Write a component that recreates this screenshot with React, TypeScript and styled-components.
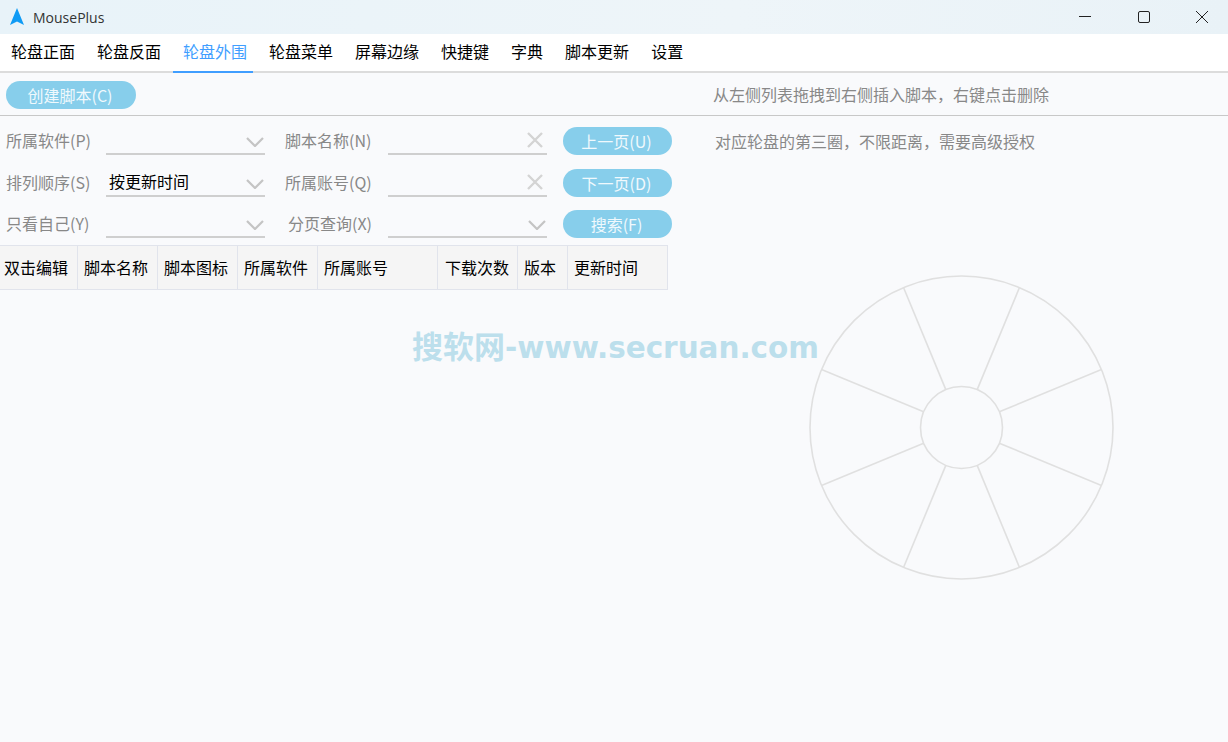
import * as React from 'react';
import styled, { createGlobalStyle } from 'styled-components'

const GlobalStyle = createGlobalStyle`
html, body {
    margin: 0;
    padding: 0;
    height: 100%;
}
body {
    font-family: "Noto Sans CJK SC", "Noto Sans", sans-serif;
    background: #f9fafc;
}
`

const Window = styled.div`
position: relative;
width: 1228px;
height: 742px;
overflow: hidden;
background: #f9fafc;
display: flex;
flex-direction: column;
`

const TitleBar = styled.div`
height: 34px;
flex: none;
display: flex;
align-items: center;
padding-left: 10px;
background: linear-gradient(90deg, #e8f3f9 0%, #eef5f9 60%, #e9f2f7 100%);
`

const AppTitle = styled.span`
margin-left: 9px;
font-family: "Open Sans", sans-serif;
font-size: 14px;
color: #333;
`

const WindowButtons = styled.div`
margin-left: auto;
display: flex;
`

const WindowButton = styled.div`
width: 58.5px;
height: 34px;
box-sizing: border-box;
padding-right: 19px;
display: flex;
align-items: center;
justify-content: flex-end;
`

const TabBar = styled.div`
height: 37px;
flex: none;
display: flex;
background: #fff;
border-bottom: 2px solid #dcdcdc;
`

const Tab = styled.div<{ $active?: boolean }>`
height: 39px;
box-sizing: border-box;
margin: 0 5px 0 1px;
padding: 0 6px 3px 10px;
display: flex;
align-items: center;
font-size: 16px;
color: ${p => (p.$active ? '#409eff' : '#000')};
border-bottom: 2px solid ${p => (p.$active ? '#409eff' : 'transparent')};
`

const Toolbar = styled.div`
height: 43px;
flex: none;
box-sizing: border-box;
display: grid;
grid-template-columns: 713px 1fr;
align-items: center;
padding-top: 2px;
border-bottom: 1px solid #c8c8c8;
`

const Main = styled.div`
flex: 1;
display: grid;
grid-template-columns: 713px 1fr;
`

const LeftPanel = styled.div`
padding-top: 11px;
`

const FormGrid = styled.div`
display: grid;
grid-template-columns: 106px 159px 123px 159px 125px;
grid-auto-rows: 41.5px;
width: 672px;
height: 118px;
`

const FieldLabel = styled.label<{ $indent?: number }>`
height: 28px;
box-sizing: border-box;
display: flex;
align-items: center;
padding-left: ${p => p.$indent ?? 6}px;
padding-bottom: 2px;
font-size: 16px;
color: #888;
`

const Field = styled.div`
height: 28px;
box-sizing: border-box;
display: flex;
align-items: center;
justify-content: space-between;
padding: 0 3px;
border-bottom: 2px solid #cfcfcf;
font-size: 16px;
color: #000;
`

const FieldValue = styled.span`
margin-bottom: 2px;
`

const PillButton = styled.button`
height: 28px;
border: none;
padding: 0 2px 0 0;
border-radius: 14px;
background: #87ceeb;
color: #f0f9fd;
font-family: inherit;
font-size: 16px;
`

const CreateButton = styled(PillButton)`
width: 130px;
margin-left: 6px;
`

const PageButton = styled(PillButton)`
width: 109px;
margin-left: 16px;
`

const Table = styled.div`
display: grid;
grid-template-columns: 78px 80px 80px 80px 120px 80px 50px 100px;
width: 668px;
height: 45px;
box-sizing: border-box;
border-top: 1px solid #e1e4ec;
border-bottom: 1px solid #e1e4ec;
border-right: 1px solid #e1e4ec;
background: #f5f5f5;
`

const HeaderCell = styled.div<{ $indent?: number }>`
display: flex;
align-items: center;
padding-left: ${p => p.$indent ?? 6}px;
padding-bottom: 2px;
font-size: 16px;
color: #000;
border-right: 1px solid #e1e4ec;
&:last-child {
    border-right: none;
}
`

const Hint = styled.div`
font-size: 16px;
color: #888;
`

const ToolbarHint = styled(Hint)`
margin-bottom: 2px;
`

const RightPanel = styled.div`
padding-top: 13px;
padding-left: 2px;
`

const Wheel = styled.svg`
display: block;
margin: 122px 0 0 94px;
`

const ChevronIcon = styled.svg`
margin: 4px -1.5px 0 0;
`

const Watermark = styled.div`
position: absolute;
left: 412px;
top: 327px;
font-family: "DejaVu Sans", "Noto Sans CJK SC", sans-serif;
font-size: 31px;
font-weight: 700;
line-height: 40px;
white-space: nowrap;
color: #bcdfec;
`

const WatermarkLatin = styled.span`
display: inline-block;
transform: scaleX(0.95);
transform-origin: left center;
`

const tabs = ['轮盘正面', '轮盘反面', '轮盘外围', '轮盘菜单', '屏幕边缘', '快捷键', '字典', '脚本更新', '设置']
const columns = [
    { title: '双击编辑', indent: 4 },
    { title: '脚本名称' },
    { title: '脚本图标' },
    { title: '所属软件' },
    { title: '所属账号' },
    { title: '下载次数', indent: 7 },
    { title: '版本' },
    { title: '更新时间' },
]

// full-width comma
const comma = '\uFF0C'
const dragHint = `从左侧列表拖拽到右侧插入脚本${comma}右键点击删除`
const ringHint = `对应轮盘的第三圈${comma}不限距离${comma}需要高级授权`

const Chevron = () => (
    <ChevronIcon width="18" height="10" viewBox="0 0 18 10" fill="none">
        <path d="M1 1 L9 9 L17 1" stroke="#c4c4c4" strokeWidth="2.2" />
    </ChevronIcon>
)

const Clear = () => (
    <svg width="18" height="18" viewBox="0 0 18 18" fill="none">
        <path d="M2 2 L16 16 M16 2 L2 16" stroke="#d4d4d4" strokeWidth="2.4" />
    </svg>
)

// 8 spokes, 22.5deg off the axes
const spokes = [22.5, 67.5, 112.5, 157.5, 202.5, 247.5, 292.5, 337.5].map(deg => {
    const a = (deg * Math.PI) / 180
    return {
        x1: 152.5 + 41 * Math.cos(a),
        y1: 152.5 + 41 * Math.sin(a),
        x2: 152.5 + 151.5 * Math.cos(a),
        y2: 152.5 + 151.5 * Math.sin(a),
    }
})

const App: React.FC = () => {
    return (
        <Window>
            <GlobalStyle />
            <TitleBar>
                <svg width="14" height="18" viewBox="0 0 14 18">
                    <path d="M7 0 L14 17 L7 13.5 L0 17 Z" fill="#0f9bf5" />
                </svg>
                <AppTitle>MousePlus</AppTitle>
                <WindowButtons>
                    <WindowButton>
                        <svg width="14" height="14" viewBox="0 0 14 14" fill="none">
                            <path d="M1 6.5 H13" stroke="#222" strokeWidth="1" />
                        </svg>
                    </WindowButton>
                    <WindowButton>
                        <svg width="14" height="14" viewBox="0 0 14 14" fill="none">
                            <rect x="1.5" y="1.5" width="11" height="11" rx="1.5" stroke="#222" strokeWidth="1" />
                        </svg>
                    </WindowButton>
                    <WindowButton>
                        <svg width="14" height="14" viewBox="0 0 14 14" fill="none">
                            <path d="M1 1 L13 13 M13 1 L1 13" stroke="#222" strokeWidth="1" />
                        </svg>
                    </WindowButton>
                </WindowButtons>
            </TitleBar>
            <TabBar>
                {tabs.map(t => <Tab key={t} $active={t === '轮盘外围'}>{t}</Tab>)}
            </TabBar>
            <Toolbar>
                <CreateButton>创建脚本(C)</CreateButton>
                <ToolbarHint>{dragHint}</ToolbarHint>
            </Toolbar>
            <Main>
                <LeftPanel>
                    <FormGrid>
                        <FieldLabel>所属软件(P)</FieldLabel>
                        <Field><span /><Chevron /></Field>
                        <FieldLabel $indent={20}>脚本名称(N)</FieldLabel>
                        <Field><span /><Clear /></Field>
                        <PageButton>上一页(U)</PageButton>

                        <FieldLabel>排列顺序(S)</FieldLabel>
                        <Field><FieldValue>按更新时间</FieldValue><Chevron /></Field>
                        <FieldLabel $indent={20}>所属账号(Q)</FieldLabel>
                        <Field><span /><Clear /></Field>
                        <PageButton>下一页(D)</PageButton>

                        <FieldLabel>只看自己(Y)</FieldLabel>
                        <Field><span /><Chevron /></Field>
                        <FieldLabel $indent={23}>分页查询(X)</FieldLabel>
                        <Field><span /><Chevron /></Field>
                        <PageButton>搜索(F)</PageButton>
                    </FormGrid>
                    <Table>
                        {columns.map(c => <HeaderCell key={c.title} $indent={c.indent}>{c.title}</HeaderCell>)}
                    </Table>
                </LeftPanel>
                <RightPanel>
                    <Hint>{ringHint}</Hint>
                    <Wheel width="305" height="305" viewBox="0 0 305 305" fill="none" stroke="#e0e0e0" strokeWidth="1.6">
                        <circle cx="152.5" cy="152.5" r="151.5" />
                        <circle cx="152.5" cy="152.5" r="41" />
                        {spokes.map((s, i) => <line key={i} {...s} />)}
                    </Wheel>
                </RightPanel>
            </Main>
            <Watermark>搜软网<WatermarkLatin>-www.secruan.com</WatermarkLatin></Watermark>
        </Window>
    )
}

export default App
